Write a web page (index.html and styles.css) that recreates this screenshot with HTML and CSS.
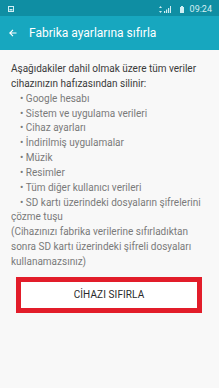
FILE: index.html
```html
<!DOCTYPE html>
<html lang="tr">
<head>
<meta charset="utf-8">
<link rel="stylesheet" href="styles.css">
</head>
<body>
<div class="screen">
  <div class="status">
    <svg class="st-pic" width="6" height="6" viewBox="0 0 6 6"><rect x="0.5" y="0.5" width="5" height="5" fill="none" stroke="#cfeef3" stroke-width="1"/><rect x="1.5" y="3" width="3" height="1.5" fill="#cfeef3"/></svg>
    <div class="st-right">
      <svg class="st-data" width="3" height="7" viewBox="0 0 3 7"><path d="M1.5 0 L3 2 H0 Z M1.5 7 L0 5 H3 Z" fill="#cfeef3"/></svg>
      <svg class="st-sig" width="7" height="7" viewBox="0 0 7 7"><rect x="0" y="5" width="1.2" height="2" fill="#cfeef3"/><rect x="2" y="3.5" width="1.2" height="3.5" fill="#cfeef3"/><rect x="4" y="2" width="1.2" height="5" fill="#cfeef3"/><rect x="6" y="0" width="1" height="7" fill="#cfeef3"/></svg>
      <svg class="st-bat" width="4" height="7" viewBox="0 0 4 7"><rect x="1" y="0" width="2" height="1" fill="#cfeef3"/><rect x="0" y="1" width="4" height="6" fill="#cfeef3"/></svg>
      <span class="st-time">09:24</span>
    </div>
  </div>
  <div class="appbar">
    <svg class="back" width="8" height="8" viewBox="0 0 8 8"><path d="M7.5 4 H1 M4 0.8 L0.8 4 L4 7.2" fill="none" stroke="#ffffff" stroke-width="1.1"/></svg>
    <span class="title">Fabrika ayarlarına sıfırla</span>
  </div>
  <div class="content">
    <p class="lead">Aşağıdakiler dahil olmak üzere tüm veriler cihazınızın hafızasından silinir:</p>
    <p class="item">• Google hesabı</p>
    <p class="item">• Sistem ve uygulama verileri</p>
    <p class="item">• Cihaz ayarları</p>
    <p class="item">• İndirilmiş uygulamalar</p>
    <p class="item">• Müzik</p>
    <p class="item">• Resimler</p>
    <p class="item">• Tüm diğer kullanıcı verileri</p>
    <p class="item">• SD kartı üzerindeki dosyaların şifrelerini çözme tuşu</p>
    <p class="note">(Cihazınızı fabrika verilerine sıfırladıktan sonra SD kartı üzerindeki şifreli dosyaları kullanamazsınız)</p>
    <div class="btn-wrap">
      <button class="btn">CİHAZI SIFIRLA</button>
    </div>
  </div>
</div>
</body>
</html>
```

FILE: styles.css
```css
html, body {
  margin: 0;
  padding: 0;
}
body {
  width: 219px;
  height: 388px;
  overflow: hidden;
  background: #f8f8f8;
  font-family: Roboto, "Noto Sans", sans-serif;
}
.screen {
  display: flex;
  flex-direction: column;
  height: 388px;
}
.status {
  height: 16px;
  background: #0f8ea3;
  display: flex;
  align-items: center;
  justify-content: space-between;
  padding: 2px 7px 0 8px;
  box-sizing: border-box;
}
.st-pic {
  display: block;
}
.st-right {
  display: flex;
  align-items: center;
  gap: 2px;
}
.st-sig { margin-right: 7px; }
.st-bat { margin-right: 4px; }
.st-time {
  color: #d5f0f4;
  font-size: 9px;
  line-height: 10px;
}
.appbar {
  height: 34px;
  background: #17a7bf;
  display: flex;
  align-items: center;
  padding-left: 9px;
  box-sizing: border-box;
}
.back {
  display: block;
  margin-right: 12px;
}
.title {
  color: #ffffff;
  font-size: 12px;
  line-height: 14px;
}
.content {
  padding: 12px 11px 0 11px;
  font-size: 10px;
  line-height: 14.85px;
}
.content p {
  margin: 0;
}
.lead {
  color: #3a3a3a;
}
.item {
  color: #7a7a7a;
  text-indent: 9px;
}
.note {
  color: #7a7a7a;
}
.btn-wrap {
  margin-top: 7px;
  margin-left: 5px;
  margin-right: 6px;
}
.btn {
  display: block;
  width: 100%;
  height: 36px;
  border: 5px solid #e21d2a;
  background: #ffffff;
  color: #2a2a2a;
  font-family: Roboto, "Noto Sans", sans-serif;
  font-size: 10px;
  padding: 0;
  letter-spacing: 0.1px;
}
```
